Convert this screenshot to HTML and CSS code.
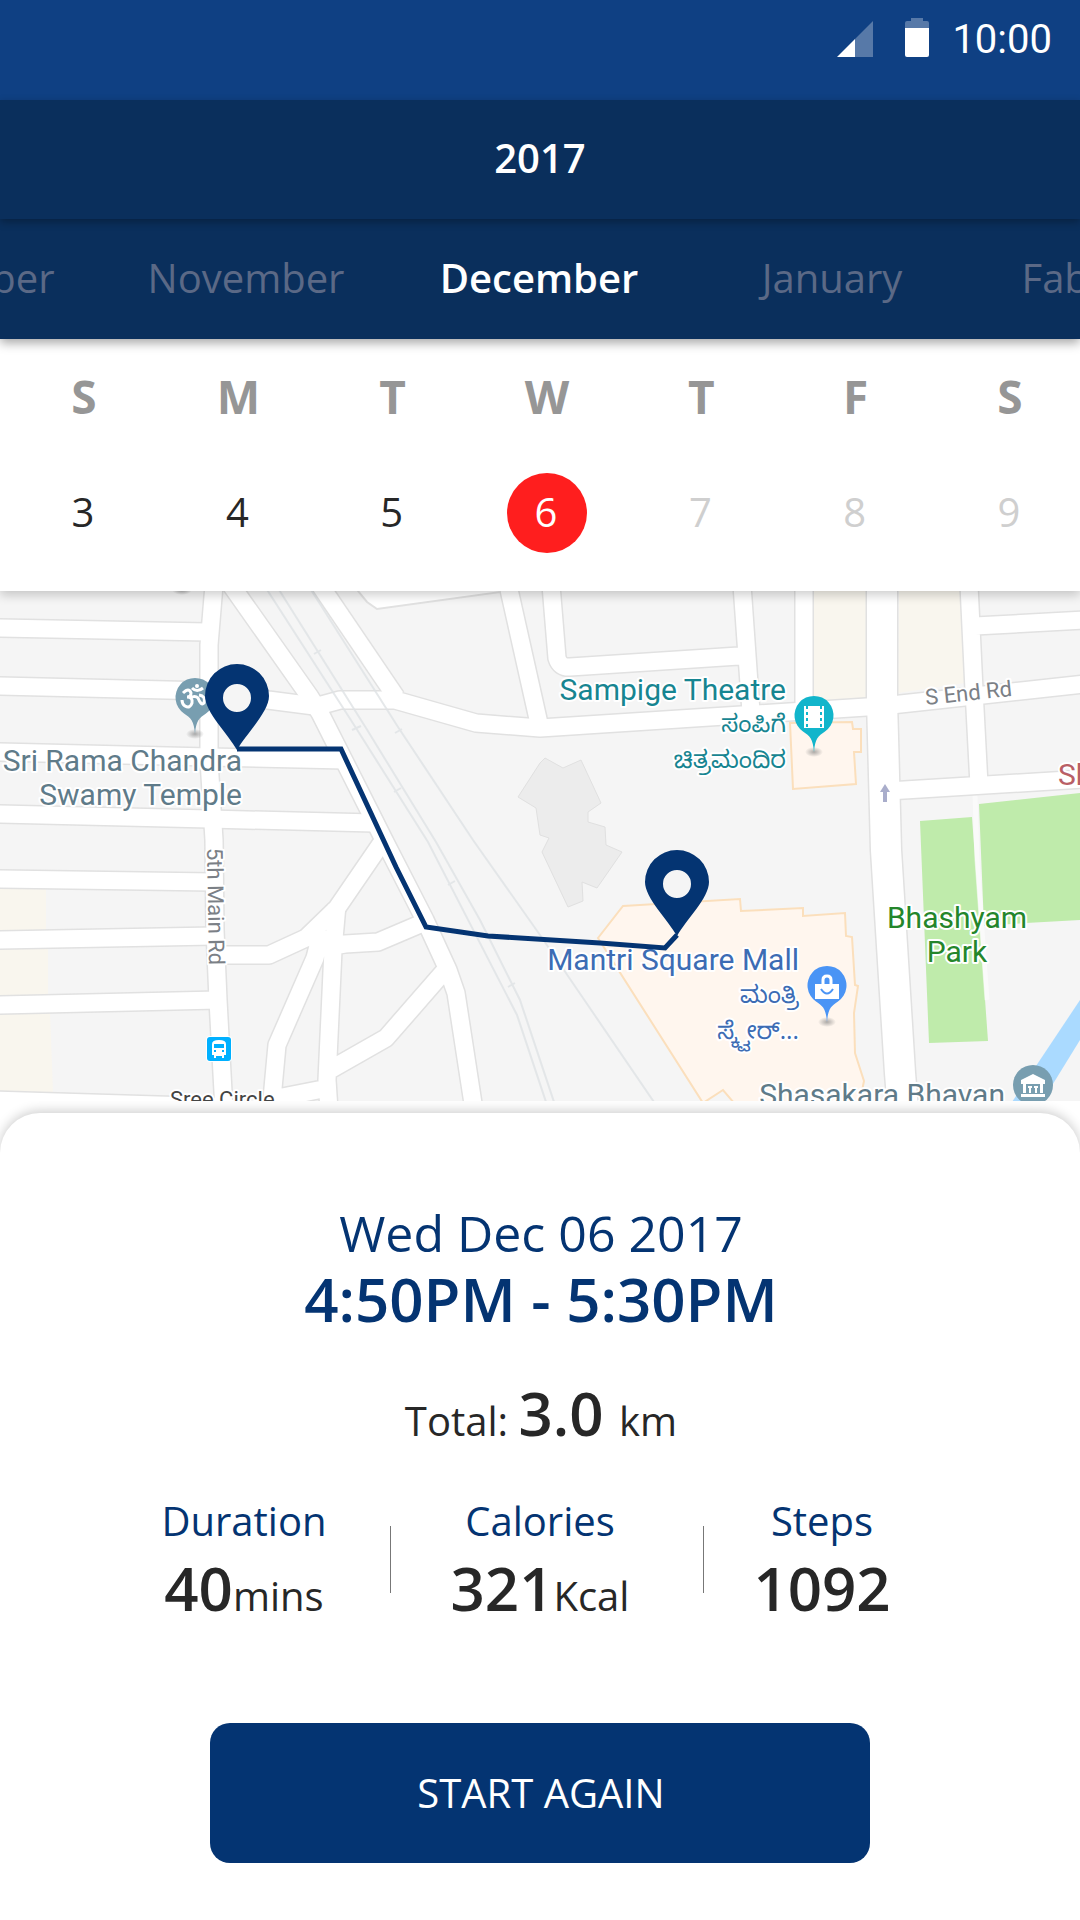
FILE: index.html
```html
<!DOCTYPE html>
<html lang="en">
<head>
<meta charset="utf-8">
<meta name="viewport" content="width=device-width, initial-scale=1">
<title>Walk history</title>
<link rel="stylesheet" href="styles.css">
</head>
<body>
<header class="status-bar">
  <svg class="signal" viewBox="0 0 36 36" width="36" height="36" aria-hidden="true"><path d="M36 0V36H18V18z" fill="#fff" fill-opacity=".3"/><path d="M0 36L18 18V36z" fill="#fff"/></svg>
  <svg class="battery" viewBox="0 0 24 39" width="24" height="39" aria-hidden="true"><path d="M6 0h12v3h4q2 0 2 2v5H0V5q0-2 2-2h4z" fill="#fff" fill-opacity=".3"/><path d="M0 10h24v27q0 2-2 2H2q-2 0-2-2z" fill="#fff"/></svg>
  <span class="clock">10:00</span>
</header>

<h1 class="year">2017</h1>

<nav class="months" aria-label="Month">
  <button class="month month-first" type="button">October</button>
  <button class="month" type="button">November</button>
  <button class="month month-current" type="button" aria-current="true">December</button>
  <button class="month" type="button">January</button>
  <button class="month month-last" type="button">Fabruary</button>
</nav>

<table class="week">
  <thead>
    <tr><th>S</th><th>M</th><th>T</th><th>W</th><th>T</th><th>F</th><th>S</th></tr>
  </thead>
  <tbody>
    <tr><td>3</td><td>4</td><td>5</td><td class="today">6</td><td class="future">7</td><td class="future">8</td><td class="future">9</td></tr>
  </tbody>
</table>

<main>
  <svg class="map" viewBox="0 591 1080 510" role="img" aria-label="Route map">
    <defs>
      <g id="roads" fill="none" stroke-linejoin="round">
        <path d="M214 585L209 645V760L214 840L215 930L218 1000L224 1110"/>
        <path d="M-5 628L207 632M-5 686L209 691L268 700L322 707M-5 752L209 757L345 760M-5 814L209 819L374 823M-5 879L213 882M-5 940L214 936M-5 1005L218 1000M-5 1100L224 1107"/>
        <path d="M215 955H269L306 938L337 908L385 838"/>
        <path d="M231 585L310 697L320 713L371 814L384 840L425 920L448 970L456 993L474 1110"/>
        <path d="M320 585L396 697"/>
        <path d="M318 706L340 700H395L476 723L540 728L882 706L1085 684"/>
        <path d="M508 585L540 728M551 585L557 658Q560 668 570 667L739 656M742 585L751 712M804 585V710"/>
        <path d="M969 585L974 690L979 785M975 626L1085 620M888 791L1085 779"/>
        <path d="M322 930L315 958L277 1045L271 1110M337 905L333 950L327 1080L329 1110M310 950L345 944L378 942L425 922M447 968L386 1038L328 1071M272 1099L328 1088"/>
      </g>
      <path id="avenue" fill="none" d="M882 585V700L886 850L900 1073L903 1110"/>
      <path id="poi" d="M0 36C-1 23-4 20-11 15.500A19.500 19.500 0 1 1 11 15.500C4 20 1 23 0 36z"/>
      <path id="route-pin" fill-rule="evenodd" d="M0 0C-9-16-32-38-32-54A32 32 0 0 1 32-54C32-38 9-16 0 0zM14-52A14 14 0 1 0-14-52A14 14 0 1 0 14-52z"/>
      <radialGradient id="spot"><stop offset="0" stop-color="#777" stop-opacity=".6"/><stop offset="1" stop-color="#777" stop-opacity="0"/></radialGradient>
    </defs>
    <rect y="585" width="1080" height="530" fill="#f5f5f5"/>
    <path fill="#f9f6ee" d="M813 585H866V702H813zM899 585H961L965 683L898 693zM0 888H46V930H0zM0 949H48V996H0zM0 1012H50L53 1092H0z"/>
    <path fill="#bfebab" d="M920 821L972 817L988 1041L929 1043zM979 804L1080 793V920L1026 923L984 926z"/>
    <path fill="none" stroke="#fff" stroke-width="5" d="M975 795L977 860L987 1000" stroke-opacity=".5"/>
    <path fill="#aadaff" d="M1080 1000L1038 1063L1010 1105H1040L1080 1040z"/>
    <path fill="#ececec" stroke="#e0e0e0" d="M545 758L563 768L581 760L601 803L588 812L588 822L605 827L606 845L622 852L597 888L582 882L583 901L568 907L542 852L549 838L540 835L536 808L518 797L540 763z"/>
    <path fill="#fff6ee" stroke="#fbdfbc" stroke-width="2" d="M790 723L852 722L853 729H861V752H854L856 784L793 789zM623 906L740 899L741 911L803 908V916L845 913L846 936L852 937L855 985L858 986L854 1013L855 1053L864 1081L858 1110H740L723 1090L703 1103L598 938z"/>
    <g stroke="#e1e1e1"><use href="#roads" stroke-width="20"/><use href="#avenue" stroke-width="33"/></g>
    <path fill="#fff" stroke="#e1e1e1" stroke-width="2" d="M358 585V591L367 602L377 609L501 592V585z"/>
    <g stroke="#fff"><use href="#roads" stroke-width="17"/><use href="#avenue" stroke-width="30"/></g>
    <path fill="none" stroke="#dfe2e5" stroke-width="2" stroke-opacity=".8" d="M264 585L356 728L428 842L517 1015L547 1105M276 585L366 728L436 842L480 920L520 1000L555 1105M308 585L398 727L473 840L540 935L583 998L656 1105M314 654L321 650M352 730L361 726M394 792L401 788M395 733L402 729M448 885L455 881M508 987L515 983"/>

    <g class="place place-grey">
      <text class="end" x="242" y="771">Sri Rama Chandra</text>
      <text class="end" x="242" y="805">Swamy Temple</text>
      <text class="end" x="1005" y="1105">Shasakara Bhavan</text>
    </g>
    <g class="place place-teal">
      <text class="end" x="786" y="700">Sampige Theatre</text>
      <text class="end kannada" x="786" y="732">ಸಂಪಿಗೆ</text>
      <text class="end kannada" x="786" y="768">ಚಿತ್ರಮಂದಿರ</text>
    </g>
    <g class="place place-blue">
      <text class="end" x="799" y="970">Mantri Square Mall</text>
      <text class="end kannada" x="799" y="1003">ಮಂತ್ರಿ</text>
      <text class="end kannada" x="799" y="1039">ಸ್ಕ್ವೇರ್...</text>
    </g>
    <g class="place place-green">
      <text class="middle" x="957" y="928">Bhashyam</text>
      <text class="middle" x="957" y="962">Park</text>
    </g>
    <text class="place place-red" x="1058" y="785">Sh</text>
    <g class="place street">
      <text transform="translate(926 705) rotate(-6)">S End Rd</text>
      <text transform="translate(207 848) rotate(89)">5th Main Rd</text>
      <text class="dark" x="170" y="1107">Sree Circle</text>
    </g>
    <path fill="#a9adcb" d="M885 784L890 792H887V802H883V792H880z"/>
    <ellipse cx="182" cy="590" rx="10" ry="5" fill="url(#spot)"/>

    <g transform="translate(195 698)">
      <ellipse cy="36" rx="9" ry="5" fill="url(#spot)"/><use href="#poi" fill="#789eb0"/>
      <path d="M-12-5Q-6-11-4-5Q-4-1-8-1Q-2-1-3 5Q-5 11-10 8Q-13 6-13 2M-5 0Q0-3 3 0Q6 8 9 5Q11-2 4-3M-3-10Q2-5 8-10" fill="none" stroke="#fff" stroke-width="3"/><circle cx="2" cy="-12" r="2" fill="#fff"/>
    </g>
    <g transform="translate(814 716)">
      <ellipse cy="36" rx="9" ry="5" fill="url(#spot)"/><use href="#poi" fill="#12b5cb"/>
      <path d="M-10-10H10V12H-10z" fill="#fff"/><path d="M-7-10V12M7-10V12" fill="none" stroke="#12b5cb" stroke-width="2" stroke-dasharray="3 3"/>
    </g>
    <g transform="translate(827 986)">
      <ellipse cy="36" rx="9" ry="5" fill="url(#spot)"/><use href="#poi" fill="#4a94f5"/>
      <path d="M-12-2H12V13H-12z" fill="#fff"/><path d="M-4-2V-6Q-4-10 0-10T4-6V-2" fill="none" stroke="#fff" stroke-width="3"/><path d="M-6 3Q0 12 6 3" fill="none" stroke="#4a94f5" stroke-width="2"/>
    </g>
    <g transform="translate(1033 1085)">
      <circle r="20" fill="#789eb0"/>
      <path d="M0-11L12-5V-1H-12V-5zM-10-1H-7V8H-10zM-5 1H-1V3H-2V8H-4V3H-5zM1 1H5V3H4V8H2V3H1zM7-1H10V8H7zM-12 9H12V12H-12z" fill="#fff"/>
    </g>
    <g transform="translate(207 1037)">
      <rect x="-1" y="-1" width="26" height="26" rx="4" fill="#fff"/><rect width="24" height="24" rx="3" fill="#00b0ff"/>
      <path fill="#fff" fill-rule="evenodd" d="M5 7Q5 3 12 3T19 7V18H17V21H15V19H9V21H7V18H5zM7 7V11H17V7zM7 13V15H9V13zM15 13V15H17V13z"/>
    </g>

    <path d="M237 749H341L396 867L426 927L488 936L600 943L665 948L677 935" fill="none" stroke="#043472" stroke-width="5"/>
    <g fill="#043472">
      <circle cx="237" cy="698" r="15" fill="#f5f5f5"/><circle cx="677" cy="884" r="15" fill="#f5f5f5"/>
      <use href="#route-pin" transform="translate(237 750)"/>
      <use href="#route-pin" transform="translate(677 936)"/>
    </g>
  </svg>

  <section class="sheet">
    <p class="date">Wed Dec 06 2017</p>
    <h2 class="time">4:50PM - 5:30PM</h2>
    <p class="total"><span class="unit">Total: </span>3.0 <span class="unit">km</span></p>
    <div class="stats">
      <div class="stat"><h3>Duration</h3><p>40<span class="unit">mins</span></p></div>
      <span class="divider"></span>
      <div class="stat"><h3>Calories</h3><p>321<span class="unit">Kcal</span></p></div>
      <span class="divider"></span>
      <div class="stat"><h3>Steps</h3><p>1092</p></div>
    </div>
    <button class="start" type="button">START AGAIN</button>
  </section>
</main>
</body>
</html>
```
FILE: styles.css
```css
* {
  box-sizing: border-box;
}

body,
h1,
h2,
h3,
p {
  margin: 0;
}

body {
  display: flex;
  flex-direction: column;
  min-height: 100vh;
  overflow-x: hidden;
  background: #fff;
  color: #272727;
  font-family: "Open Sans", sans-serif;
  font-size: 40px;
}

button {
  border: 0;
  font: inherit;
}

.status-bar {
  display: flex;
  justify-content: flex-end;
  align-items: flex-end;
  height: 100px;
  padding: 0 28px 43px 0;
  background: #0f4083;
  color: #fff;
}

.battery {
  margin-left: 32px;
}

.clock {
  height: 38px;
  margin-left: 23px;
  font: 40px/42px Roboto, sans-serif;
}

.year {
  position: relative;
  z-index: 3;
  padding-bottom: 4px;
  background: #0a2f5c;
  box-shadow: 0 3px 8px rgba(0, 0, 0, 0.3);
  color: #fff;
  font-size: 40px;
  font-weight: 600;
  line-height: 115px;
  text-align: center;
}

.months {
  position: relative;
  z-index: 2;
  display: grid;
  grid-template-columns: repeat(5, 293px);
  justify-content: center;
  height: 120px;
  overflow: hidden;
  background: #0a2f5c;
  box-shadow: 0 4px 10px rgba(0, 0, 0, 0.35);
}

.month {
  padding: 0 2px 4px 0;
  background: none;
  color: #5b6986;
  text-align: center;
}

.month-current {
  color: #fff;
  font-weight: 600;
}

.month-first {
  padding-right: 46px;
  text-align: right;
}

.month-last {
  padding-left: 42px;
  text-align: left;
}

.week {
  position: relative;
  z-index: 1;
  display: block;
  padding: 18px 30px 38px 44px;
  background: #fff;
  box-shadow: 0 4px 10px rgba(0, 0, 0, 0.2);
}

.week thead,
.week tbody {
  display: block;
}

.week tr {
  display: flex;
  justify-content: space-between;
}

.week th,
.week td {
  width: 80px;
  height: 80px;
  padding: 0;
  line-height: 78px;
  text-align: center;
}

.week th {
  color: #969696;
  font-size: 46px;
  font-weight: 700;
}

.week td {
  padding-right: 2px;
}

.week tbody {
  margin-top: 36px;
}

.week .today {
  border-radius: 50%;
  background: #ff1e1e;
  color: #fff;
}

.week .future {
  color: #cfcfcf;
}

.map {
  display: block;
  width: 100%;
  height: auto;
}

.place {
  paint-order: stroke;
  stroke: #fff;
  stroke-width: 4px;
  stroke-linejoin: round;
  font: 30px Roboto, sans-serif;
}

.place .end {
  text-anchor: end;
}

.place .middle {
  text-anchor: middle;
}

.place .kannada {
  font: 24px "Noto Sans Kannada", "Noto Sans", sans-serif;
}

.place-grey {
  fill: #5f7b89;
}

.place-teal {
  fill: #178591;
}

.place-blue {
  fill: #3c6cb4;
}

.place-green {
  fill: #24862b;
}

.place-red {
  fill: #b95f66;
}

.street {
  fill: #7b8086;
  font-size: 22px;
}

.street .dark {
  fill: #444;
}

.sheet {
  display: flex;
  flex-direction: column;
  align-items: center;
  margin-top: 12px;
  padding: 86px 0 57px;
  border-radius: 40px 40px 0 0;
  background: #fff;
  box-shadow: 0 -2px 12px rgba(0, 0, 0, 0.2);
}

.date {
  color: #043472;
  font-size: 50px;
  line-height: 68px;
}

.time {
  color: #043472;
  font-size: 60px;
  font-weight: 600;
  line-height: 64px;
}

.total {
  margin-top: 42px;
  font-size: 60px;
  font-weight: 600;
  line-height: 80px;
}

.date,
.time,
.total {
  padding-left: 2px;
}

.unit {
  font-size: 40px;
  font-weight: 400;
  line-height: 1;
}

.stats {
  display: grid;
  grid-template-columns: 292fr 1px 298fr 15px 236fr;
  align-self: stretch;
  margin-top: 40px;
  padding: 0 140px 0 98px;
}

.stat {
  text-align: center;
}

.stat h3 {
  color: #043472;
  font-size: 40px;
  font-weight: 400;
  line-height: 56px;
}

.stat p {
  font-size: 60px;
  font-weight: 600;
  line-height: 78px;
}

.divider {
  justify-self: end;
  width: 1px;
  height: 67px;
  margin-top: 33px;
  background: #777;
}

.start {
  width: 660px;
  max-width: 90%;
  height: 140px;
  margin-top: 96px;
  padding: 0 0 2px 2px;
  border-radius: 20px;
  background: #043472;
  color: #fff;
}
```
